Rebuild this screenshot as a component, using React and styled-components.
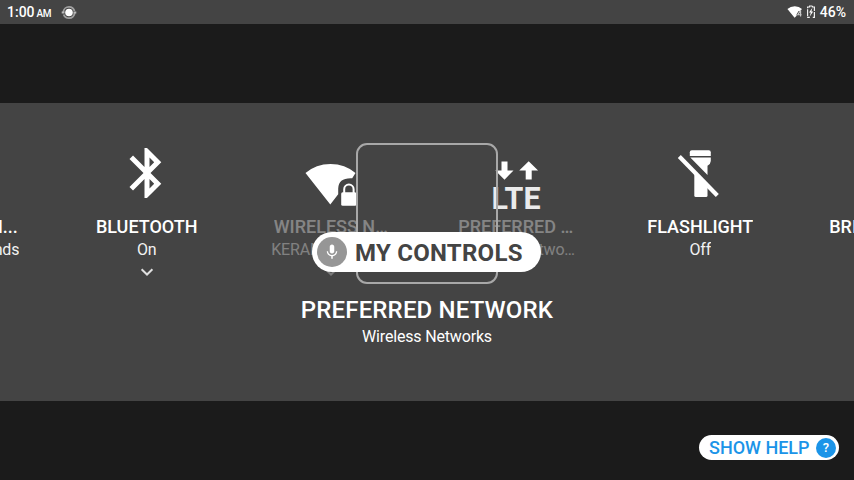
import React from "react";
import styled, { createGlobalStyle, css } from "styled-components";

const Global = createGlobalStyle`
  *, *::before, *::after { box-sizing: border-box; }
  html, body { margin: 0; padding: 0; overflow: hidden; }
  body { background: #1b1b1b; font-family: Roboto, sans-serif; color: #fff; }
  svg { display: block; flex: none; overflow: visible; }
`;

const Screen = styled.div`
  width: 854px;
  height: 480px;
  display: flex;
  flex-direction: column;
  background: #1b1b1b;
  overflow: hidden;
`;

const StatusBar = styled.header`
  height: 24px;
  padding: 0 8px 0 7px;
  display: flex;
  align-items: center;
  justify-content: space-between;
  background: #444;
`;

const StatusGroup = styled.div`
  display: flex;
  align-items: center;
  gap: ${(p) => p.$gap}px;
`;

const Clock = styled.div`
  padding-top: 1px;
  font-size: 14px;
  font-weight: 500;
  line-height: 24px;
  white-space: nowrap;
`;

const Meridiem = styled.span`
  font-size: 10px;
  letter-spacing: -0.4px;
  margin-left: 2px;
`;

const Level = styled.div`
  font-size: 14px;
  font-weight: 500;
  line-height: 24px;
`;

const Panel = styled.main`
  position: relative;
  height: 298px;
  margin-top: 79px;
  padding-top: 40px;
  background: #444;
  overflow: hidden;
`;

const Carousel = styled.div`
  display: flex;
  justify-content: center;
  height: 150px;
  padding-right: 7px;
`;

const Tile = styled.section`
  flex: none;
  width: 184.5px;
  display: flex;
  flex-direction: column;
  align-items: center;
`;

const TileIcon = styled.div`
  width: 60px;
  height: 60px;
`;

const TileText = styled.div`
  display: flex;
  flex-direction: column;
  align-items: center;
  margin-top: 12px;
  opacity: ${(p) => (p.$dim ? 0.35 : 1)};
`;

const line = css`
  white-space: nowrap;
  overflow: hidden;
  text-overflow: ellipsis;
  text-align: ${(p) => p.$align || "center"};
`;

const Title = styled.div`
  min-width: ${(p) => (p.$align ? "111px" : "0")};
  max-width: 115px;
  font-size: 18px;
  font-weight: 500;
  line-height: 24px;
  ${line}
`;

const State = styled.div`
  min-width: ${(p) => (p.$align ? "114px" : "0")};
  max-width: 120px;
  margin-top: 1px;
  font-size: 16px;
  line-height: 20px;
  letter-spacing: -0.17px;
  color: #f2f2f2;
  ${line}
`;

const ChevronBox = styled.div`
  margin-top: 8px;
`;

const Caption = styled.div`
  display: flex;
  flex-direction: column;
  align-items: center;
  padding-top: 1px;
`;

const CaptionTitle = styled.div`
  font-size: 24px;
  font-weight: 500;
  line-height: 32px;
  letter-spacing: 0.15px;
`;

const CaptionSub = styled.div`
  margin-top: 1px;
  font-size: 16px;
  line-height: 20px;
  letter-spacing: -0.17px;
`;

const Frame = styled.div`
  position: absolute;
  left: 356px;
  top: 40px;
  width: 142px;
  height: 141px;
  border: 2px solid #a8a8a8;
  border-radius: 11px;
`;

const Pill = styled.div`
  position: absolute;
  left: 312px;
  top: 129px;
  width: 229px;
  height: 40px;
  padding-left: 5px;
  display: flex;
  align-items: center;
  gap: 8px;
  border-radius: 20px;
  background: #fff;
  color: #444;
  font-size: 24px;
  font-weight: 700;
  letter-spacing: 0.25px;
  line-height: 28px;
  white-space: nowrap;
`;

const PillLabel = styled.span`
  padding-top: 2px;
`;

const MicBadge = styled.span`
  flex: none;
  width: 30px;
  height: 30px;
  border-radius: 50%;
  background: #969696;
  display: flex;
  align-items: center;
  justify-content: center;
`;

const Footer = styled.footer`
  padding: 34px 15px 0;
  display: flex;
  justify-content: flex-end;
`;

const HelpButton = styled.button`
  width: 140px;
  height: 25px;
  padding: 0 3px 0 10px;
  display: flex;
  align-items: center;
  justify-content: space-between;
  border: 0;
  border-radius: 13px;
  background: #fff;
  color: #1b94e8;
  font: 500 18px/25px Roboto, sans-serif;
  white-space: nowrap;
`;

const HelpMark = styled.span`
  width: 20px;
  height: 20px;
  border-radius: 50%;
  background: #1b94e8;
  color: #fff;
  font-size: 13px;
  line-height: 20px;
  text-align: center;
`;

const Bluetooth = () => (
  <svg width="60" height="60" viewBox="0 0 24 24" fill="#fff">
    <path d="M17.71 7.71 12 2h-1v7.59L6.41 5 5 6.41 10.59 12 5 17.59 6.41 19 11 14.41V22h1l5.71-5.71L13.41 12l4.3-4.29zM13 5.83l1.88 1.88L13 9.59V5.83zm1.88 10.46L13 18.17v-3.76l1.88 1.88z" />
  </svg>
);

const WifiLock = () => (
  <svg width="60" height="60" fill="none">
    <path d="M29.3 61.5 4.5 30Q15 21 29.5 21T54.5 30L51.2 35.2Q37.5 34.5 37.2 45.5V51.3Z" fill="#fff" />
    <rect x="40.2" y="49.3" width="15.2" height="13.4" rx="1.5" fill="#fff" />
    <path d="M43.2 50V46.3a4.7 4.7 0 0 1 9.4 0V50" stroke="#fff" strokeWidth="2" />
  </svg>
);

const Lte = () => (
  <svg width="60" height="60" fill="#fff">
    <path d="M15.5 18.5h6v9h6L18.5 36.7 9.3 27.5h6.2z" />
    <path d="M39.7 36.5h6v-9h6.4L42.7 18.3 33.2 27.5h6.5z" />
    <text x="5.5" y="66" fontSize="31" fontWeight="700" fill="#ebebeb" textLength="49" lengthAdjust="spacingAndGlyphs">LTE</text>
  </svg>
);

const FlashlightOff = () => (
  <svg width="60" height="60" fill="#fff">
    <path d="M19.8 12.9V9.3q0-2 2-2h17q2 0 2 2v3.6z" />
    <path d="M20.3 14.6h20.5v3.3q0 2.6-3.3 4.9v9.2z" />
    <path d="M24.3 29 37.5 42.5v10q0 1.5-1.5 1.5H25.8q-1.5 0-1.5-1.5z" />
    <path d="M9.3 13.5 47.3 52.5" stroke="#fff" strokeWidth="4.2" />
  </svg>
);

const Chevron = () => (
  <svg width="12" height="8" fill="none">
    <path d="m.6 1.3 5.4 5.2 5.4-5.2" stroke="#e0e0e0" strokeWidth="2" />
  </svg>
);

const Mic = () => (
  <svg width="18" height="18" viewBox="0 0 24 24" fill="#fff">
    <path d="M12 14c1.66 0 3-1.34 3-3V5c0-1.66-1.34-3-3-3S9 3.34 9 5v6c0 1.66 1.34 3 3 3zm5.3-3c0 3-2.54 5.1-5.3 5.1S6.7 14 6.7 11H5c0 3.41 2.72 6.23 6 6.72V21h2v-3.28c3.28-.48 6-3.3 6-6.72h-1.7z" />
  </svg>
);

const SyncDot = () => (
  <svg width="14" height="14" fill="none">
    <circle cx="7" cy="7.5" r="5.7" stroke="#a0a0a0" strokeWidth="1.8" strokeDasharray="15.4 2.5" />
    <circle cx="7" cy="7.5" r="3.8" fill="#fff" />
    <path d="M-.3 7.5h2.8M11.5 7.5h2.8" stroke="#bbb" strokeWidth="1.8" />
  </svg>
);

const WifiFour = () => (
  <svg width="14" height="12" fill="#fff">
    <path d="M6.6 11.8-.6 3Q2.5.3 6.8.3T14 3L12.2 5H10.6L8.6 8.2V9.8Z" />
    <path d="M12.6 4.6v6M12.3 4.9 9.8 8.7h3.8" stroke="#ccc" strokeWidth="1.1" fill="none" />
  </svg>
);

const Battery = () => (
  <svg width="8" height="14" fill="none">
    <path d="M5.4 1H2.6v1H.6v10.4h2.2M5.4 1v1h2v10.4H5.2" stroke="#f0f0f0" strokeWidth="1.2" strokeDasharray="7 1" />
    <path d="M5.4 2.8 2 7.6h1.8l-1 4L6.2 6.6H4.4z" fill="#fff" />
  </svg>
);

const tiles = [
  { title: "SCREEN N...", state: "Sounds", align: "right" },
  { title: "BLUETOOTH", state: "On", Icon: Bluetooth, more: true },
  { title: "WIRELESS NETWORK", state: "KERAMIDAS_5G_Home", Icon: WifiLock, more: true, dim: true },
  { title: "PREFERRED NETWORK", state: "Wireless Netwo...", Icon: Lte, dim: true },
  { title: "FLASHLIGHT", state: "Off", Icon: FlashlightOff },
  { title: "BRIGHTNESS", state: "", align: "left" },
];

export default function App() {
  return (
    <>
      <Global />
      <Screen>
        <StatusBar>
          <StatusGroup $gap={11}>
            <Clock>1:00<Meridiem>AM</Meridiem></Clock>
            <SyncDot />
          </StatusGroup>
          <StatusGroup $gap={5}>
            <WifiFour />
            <Battery />
            <Level>46%</Level>
          </StatusGroup>
        </StatusBar>
        <Panel>
          <Carousel>
            {tiles.map(({ title, state, Icon, more, dim, align }) => (
              <Tile key={title}>
                <TileIcon>{Icon && <Icon />}</TileIcon>
                <TileText $dim={dim}>
                  <Title $align={align}>{title}</Title>
                  <State $align={align}>{state}</State>
                  {more && <ChevronBox><Chevron /></ChevronBox>}
                </TileText>
              </Tile>
            ))}
          </Carousel>
          <Caption>
            <CaptionTitle>PREFERRED NETWORK</CaptionTitle>
            <CaptionSub>Wireless Networks</CaptionSub>
          </Caption>
          <Frame />
          <Pill><MicBadge><Mic /></MicBadge><PillLabel>MY CONTROLS</PillLabel></Pill>
        </Panel>
        <Footer>
          <HelpButton>SHOW HELP<HelpMark>?</HelpMark></HelpButton>
        </Footer>
      </Screen>
    </>
  );
}
